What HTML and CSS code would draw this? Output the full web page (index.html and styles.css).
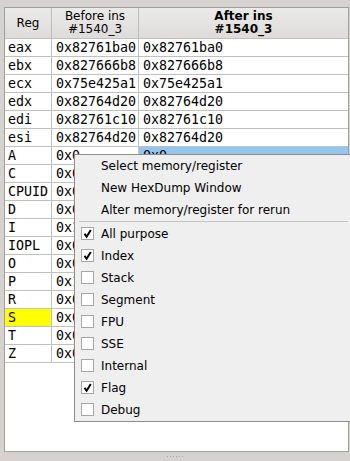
FILE: index.html
```html
<!DOCTYPE html>
<html>
<head>
<meta charset="utf-8">
<link rel="stylesheet" href="styles.css">
</head>
<body>
<div class="frame">
  <div class="header">
    <div class="hcell c1">Reg</div>
    <div class="hcell c2">Before ins<br>#1540_3</div>
    <div class="hcell c3 bold">After ins<br>#1540_3</div>
  </div>
  <div class="row"><div class="cell c1">eax</div><div class="cell c2">0x82761ba0</div><div class="cell c3">0x82761ba0</div></div>
  <div class="row"><div class="cell c1">ebx</div><div class="cell c2">0x827666b8</div><div class="cell c3">0x827666b8</div></div>
  <div class="row"><div class="cell c1">ecx</div><div class="cell c2">0x75e425a1</div><div class="cell c3">0x75e425a1</div></div>
  <div class="row"><div class="cell c1">edx</div><div class="cell c2">0x82764d20</div><div class="cell c3">0x82764d20</div></div>
  <div class="row"><div class="cell c1">edi</div><div class="cell c2">0x82761c10</div><div class="cell c3">0x82761c10</div></div>
  <div class="row"><div class="cell c1">esi</div><div class="cell c2">0x82764d20</div><div class="cell c3">0x82764d20</div></div>
  <div class="row"><div class="cell c1">A</div><div class="cell c2">0x0</div><div class="cell c3 sel">0x0</div></div>
  <div class="row"><div class="cell c1">C</div><div class="cell c2">0x0</div><div class="cell c3">0x0</div></div>
  <div class="row"><div class="cell c1">CPUID</div><div class="cell c2">0x0</div><div class="cell c3">0x0</div></div>
  <div class="row"><div class="cell c1">D</div><div class="cell c2">0x0</div><div class="cell c3">0x0</div></div>
  <div class="row"><div class="cell c1">I</div><div class="cell c2">0x1</div><div class="cell c3">0x1</div></div>
  <div class="row"><div class="cell c1">IOPL</div><div class="cell c2">0x0</div><div class="cell c3">0x0</div></div>
  <div class="row"><div class="cell c1">O</div><div class="cell c2">0x0</div><div class="cell c3">0x0</div></div>
  <div class="row"><div class="cell c1">P</div><div class="cell c2">0x1</div><div class="cell c3">0x1</div></div>
  <div class="row"><div class="cell c1">R</div><div class="cell c2">0x0</div><div class="cell c3">0x0</div></div>
  <div class="row"><div class="cell c1 hl">S</div><div class="cell c2">0x0</div><div class="cell c3">0x0</div></div>
  <div class="row"><div class="cell c1">T</div><div class="cell c2">0x0</div><div class="cell c3">0x0</div></div>
  <div class="row"><div class="cell c1">Z</div><div class="cell c2">0x0</div><div class="cell c3">0x0</div></div>
</div>
<div class="handle"></div>

<div class="menu">
  <div class="item">Select memory/register</div>
  <div class="item">New HexDump Window</div>
  <div class="item">Alter memory/register for rerun</div>
  <div class="sep"></div>
  <div class="item"><span class="box"><svg viewBox="0 0 13 13" width="13" height="13"><polyline points="3.5,6.8 5.6,9.8 9.8,3" fill="none" stroke="#000" stroke-width="2"/></svg></span>All purpose</div>
  <div class="item"><span class="box"><svg viewBox="0 0 13 13" width="13" height="13"><polyline points="3.5,6.8 5.6,9.8 9.8,3" fill="none" stroke="#000" stroke-width="2"/></svg></span>Index</div>
  <div class="item"><span class="box"></span>Stack</div>
  <div class="item"><span class="box"></span>Segment</div>
  <div class="item"><span class="box"></span>FPU</div>
  <div class="item"><span class="box"></span>SSE</div>
  <div class="item"><span class="box"></span>Internal</div>
  <div class="item"><span class="box"><svg viewBox="0 0 13 13" width="13" height="13"><polyline points="3.5,6.8 5.6,9.8 9.8,3" fill="none" stroke="#000" stroke-width="2"/></svg></span>Flag</div>
  <div class="item"><span class="box"></span>Debug</div>
</div>
</body>
</html>
```

FILE: styles.css
```css
html, body {
  margin: 0;
  padding: 0;
}
body {
  width: 350px;
  height: 461px;
  overflow: hidden;
  background: #d6d2d0;
  position: relative;
  font-family: "DejaVu Sans", sans-serif;
  font-size: 12px;
  color: #000;
}
.frame {
  margin: 7px 1px 0 4px;
  height: 443px;
  border: 1px solid #a2a09e;
  background: #fff;
}
.header {
  display: flex;
  height: 30px;
  border-bottom: 1px solid #c0c0c0;
  background: linear-gradient(#ebeae8, #dedcda);
}
.hcell {
  display: flex;
  align-items: center;
  justify-content: center;
  text-align: center;
  line-height: 13px;
  border-right: 1px solid #bebcba;
}
.bold { font-weight: bold; }
.c1 { width: 46px; flex: none; }
.c2 { width: 86px; flex: none; }
.c3 { flex: 1; border-right: none; }
.row {
  display: flex;
  height: 17px;
  border-bottom: 1px solid #c0c0c0;
}
.cell {
  font-family: "DejaVu Sans Mono", monospace;
  font-size: 13.3px;
  line-height: 17px;
  padding-left: 3px;
  box-sizing: border-box;
  border-right: 1px solid #c0c0c0;
  white-space: nowrap;
  overflow: hidden;
}
.cell.c1 { width: 47px; }
.cell.c2 { width: 87px; padding-left: 4px; }
.cell.c3 { border-right: none; padding-left: 4px; }
.sel { background: #93c6ef; }
.hl { background: #ffff00; }
.handle {
  margin: 4px auto 0;
  width: 17px;
  height: 1px;
  background: repeating-linear-gradient(90deg, #a8a6a4 0 1px, transparent 1px 3px);
}
.menu {
  position: absolute;
  left: 74px;
  top: 154px;
  width: 300px;
  border: 1px solid #8c8c8c;
  background: #efefef;
}
.item {
  height: 22px;
  line-height: 22px;
  padding-left: 26px;
  position: relative;
  white-space: nowrap;
}
.box {
  position: absolute;
  left: 6px;
  top: 4px;
  width: 13px;
  height: 13px;
  box-sizing: border-box;
  border: 1px solid #a6a6a6;
  background: #fff;
}
.box svg {
  display: block;
  margin: -1px;
}
.sep {
  height: 1px;
  margin: 0 27px 1px 4px;
  background: #c4c4c4;
}
```
